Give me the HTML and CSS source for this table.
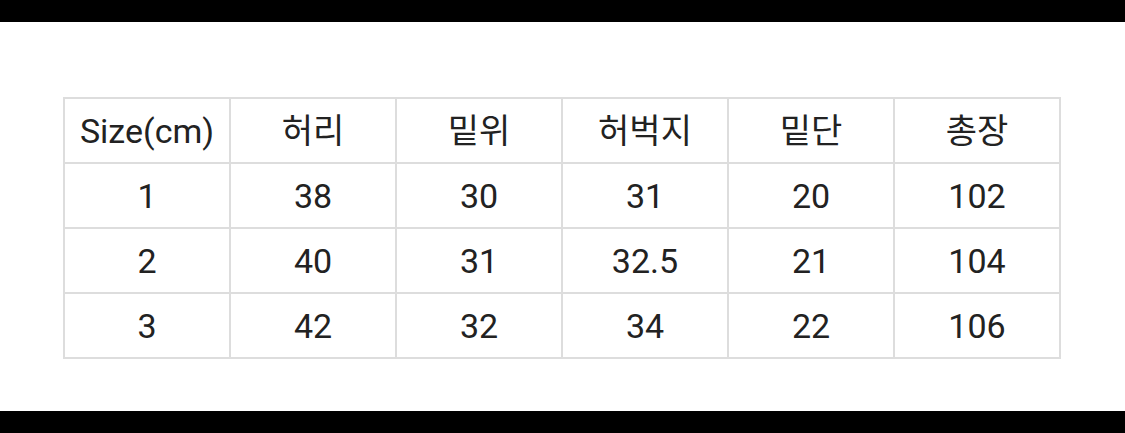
FILE: index.html
```html
<!DOCTYPE html>
<html lang="ko">
<head>
<meta charset="utf-8">
<link rel="stylesheet" href="styles.css">
</head>
<body>
<div class="bar"></div>
<main class="content">
  <div class="table">
    <div class="cell">Size(cm)</div><div class="cell">허리</div><div class="cell">밑위</div><div class="cell">허벅지</div><div class="cell">밑단</div><div class="cell">총장</div>
    <div class="cell">1</div><div class="cell">38</div><div class="cell">30</div><div class="cell">31</div><div class="cell">20</div><div class="cell">102</div>
    <div class="cell">2</div><div class="cell">40</div><div class="cell">31</div><div class="cell">32.5</div><div class="cell">21</div><div class="cell">104</div>
    <div class="cell">3</div><div class="cell">42</div><div class="cell">32</div><div class="cell">34</div><div class="cell">22</div><div class="cell">106</div>
  </div>
</main>
<div class="bar"></div>
</body>
</html>
```
FILE: styles.css
```css
html, body {
  margin: 0;
  padding: 0;
  background: #fff;
}
body {
  width: 1125px;
  height: 433px;
  display: flex;
  flex-direction: column;
  font-family: Roboto, "Noto Sans CJK KR", sans-serif;
  color: #222;
  overflow: hidden;
}
.bar {
  height: 22px;
  background: #000;
  flex: none;
}
.content {
  flex: 1;
  padding: 75px 0 0 63px;
}
.table {
  box-sizing: border-box;
  width: 998px;
  display: grid;
  grid-template-columns: repeat(6, 1fr);
  grid-auto-rows: 63px;
  gap: 2px;
  padding: 2px;
  background: #dddddd;
}
.cell {
  background: #fff;
  display: flex;
  align-items: center;
  justify-content: center;
  font-size: 34px;
  line-height: 1;
}
```
